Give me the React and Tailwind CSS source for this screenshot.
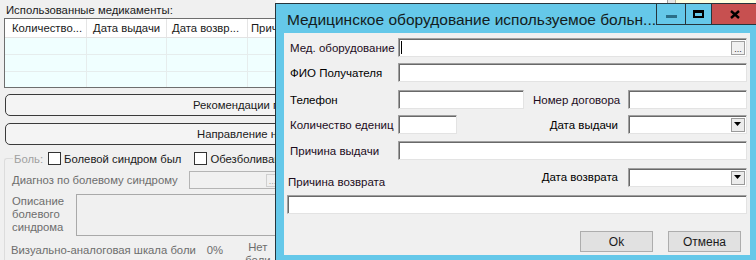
import React from "react";

const sunken =
  "bg-white border border-t-[#a0a0a0] border-l-[#a0a0a0] border-b-[#e3e3e3] border-r-[#e3e3e3] shadow-[inset_1px_1px_0_#696969]";

function Field({ className = "", children }) {
  return (
    <div className={`h-[19px] flex items-center shrink-0 ${sunken} ${className}`}>
      {children}
    </div>
  );
}

function DotsButton() {
  return (
    <div className="ml-auto mr-[1px] w-[14px] h-[14px] border border-[#a0a0a0] bg-[#f0f0f0] flex items-end justify-center text-[9px] leading-[9px] text-[#303030]">
      ...
    </div>
  );
}

function DropButton() {
  return (
    <div className="ml-auto mr-[1px] w-[14px] h-[14px] border border-[#9a9a9a] bg-[#ececec] flex items-center justify-center">
      <svg width="8" height="5" viewBox="0 0 8 5">
        <path d="M0 0h7L3.5 4z" fill="#000" />
      </svg>
    </div>
  );
}

function Label({ className = "", children }) {
  return (
    <div className={`text-[11.5px] leading-[14px] whitespace-nowrap shrink-0 text-[#1c0c1c] ${className}`}>
      {children}
    </div>
  );
}

function Checkbox() {
  return <div className="w-[13px] h-[13px] border border-[#333] bg-white shrink-0" />;
}

function BackgroundApp() {
  return (
    <div className="flex w-[756px] h-[260px] text-[11.3px]">
      <div className="w-[276px] shrink-0 overflow-hidden bg-[#f0f0f0] pt-[3px]">
        <div className="pl-[6px] h-[15px] leading-[14px] text-[#1a1a1a] whitespace-nowrap">
          Использованные медикаменты:
        </div>
        <div className="ml-[4px] w-[320px] h-[70px] border border-[#6e6e6e] bg-[#f0ffff] flex flex-col">
          <div className="flex h-[19px] bg-white border-b border-[#e3e3e3] leading-[14px] text-[#1a1a1a] whitespace-nowrap">
            <div className="w-[82px] border-r border-[#e5e5e5] pl-[7px] flex items-center">Количество...</div>
            <div className="w-[80px] border-r border-[#e5e5e5] pl-[6px] flex items-center">Дата выдачи</div>
            <div className="w-[81px] border-r border-[#e5e5e5] pl-[5px] flex items-center">Дата возвр...</div>
            <div className="flex-1 pl-[3px] flex items-center">Причина</div>
          </div>
          {[0, 1, 2].map((i) => (
            <div key={i} className={`flex ${i < 2 ? "h-[17px] border-b border-[#e6eded]" : "flex-1"}`}>
              <div className="w-[82px] border-r border-[#e6eded]" />
              <div className="w-[80px] border-r border-[#e6eded]" />
              <div className="w-[81px] border-r border-[#e6eded]" />
              <div className="flex-1" />
            </div>
          ))}
        </div>
        <div className="mt-[6px] ml-[5px] w-[330px] h-[22px] rounded-[5px] border border-[#3a3a3a] bg-[#f4f4f4] flex items-center pl-[187px] text-[#1a1a1a] whitespace-nowrap">
          Рекомендации по лечению
        </div>
        <div className="mt-[7px] ml-[5px] w-[330px] h-[22px] rounded-[5px] border border-[#3a3a3a] bg-[#f4f4f4] flex items-center pl-[191px] text-[#1a1a1a] whitespace-nowrap">
          Направление на
        </div>
        <fieldset className="mt-[6px] ml-[4px] w-[330px] h-[120px] border-l border-t border-[#dcdcdc] rounded-tl-[3px]">
          <legend className="ml-[8px] h-[15px] flex items-center leading-[14px] whitespace-nowrap">
            <span className="text-[#a0a0a0] pl-[1px]">Боль:</span>
            <span className="ml-[5px]"><Checkbox /></span>
            <span className="ml-[3px] text-[#1a1a1a]">Болевой синдром был</span>
            <span className="ml-[13px]"><Checkbox /></span>
            <span className="ml-[3px] text-[#1a1a1a]">Обезболивание</span>
          </legend>
          <div className="flex mt-[5px] pl-[7px] h-[18px] items-center">
            <div className="w-[177px] leading-[14px] text-[#6d6d6d] whitespace-nowrap">
              Диагноз по болевому синдрому
            </div>
            <div className="w-[120px] h-[18px] border border-[#b4b4b4] bg-[#f0f0f0] flex items-center">
              <div className="ml-[76px] w-[13px] h-[13px] border border-[#cfcfcf] flex items-end justify-center text-[9px] leading-[9px] text-[#a0a0a0]">
                ...
              </div>
            </div>
          </div>
          <div className="flex mt-[5px] pl-[7px]">
            <div className="w-[64px] pt-[1px] leading-[13px] text-[#6d6d6d]">
              Описание
              <br />
              болевого
              <br />
              синдрома
            </div>
            <div className="w-[220px] h-[42px] border border-[#a9a9a9] bg-[#f0f0f0]" />
          </div>
          <div className="flex mt-[5px] pl-[6px] leading-[13px] text-[#6d6d6d] whitespace-nowrap">
            <div className="pt-[3px]">Визуально-аналоговая шкала боли</div>
            <div className="pt-[3px] ml-[11px]">0%</div>
            <div className="ml-[22px] text-center">
              Нет
              <br />
              боли
            </div>
          </div>
        </fieldset>
      </div>
      <div className="flex-1 bg-white" />
      <div className="w-[8px] bg-[#e6e6e6] border-l border-[#a0a0a0]" />
      <div className="w-[81px] bg-[#ffffe1] border-l border-[#b8b89a]" />
    </div>
  );
}

function Dialog() {
  return (
    <div className="absolute left-[275px] top-[3px] w-[481px] h-[257px] bg-[#65c8e9] border-l border-t border-[#26353c] flex flex-col">
      <div className="h-[29px] flex items-start shrink-0">
        <div className="ml-[11px] mt-[7px] text-[15.5px] leading-[18px] text-[#141c20] whitespace-nowrap">
          Медицинское оборудование используемое больн...
        </div>
        <div className="ml-auto mr-[1px] -mt-px flex h-[22px]">
          <div className="w-[30px] border border-[#26353c] flex items-center justify-center">
            <div className="w-[11px] h-[3px] bg-[#2a6e88] mt-[5px]" />
          </div>
          <div className="w-[26px] border-y border-r border-[#26353c] flex items-center justify-center">
            <div className="w-[11px] h-[8px] border-2 border-t-[3px] border-black" />
          </div>
          <div className="w-[47px] border-y border-r border-[#26353c] bg-[#c75050] flex items-center justify-center">
            <svg width="10" height="9" viewBox="0 0 10 9">
              <path d="M1 1l8 7M9 1l-8 7" stroke="#000" strokeWidth="2.4" />
            </svg>
          </div>
        </div>
      </div>
      <div className="ml-[8px] w-[466px] h-[222px] bg-[#f0f0f0] flex flex-col pt-[5px]">
        <div className="flex items-center">
          <Label className="w-[114px] pl-[6px]">Мед. оборудование</Label>
          <Field className="w-[349px]">
            <div className="ml-[2px] w-px h-[13px] bg-black" />
            <DotsButton />
          </Field>
        </div>
        <div className="flex items-center mt-[6px]">
          <Label className="w-[114px] pl-[6px] text-black">ФИО Получателя</Label>
          <Field className="w-[349px]" />
        </div>
        <div className="flex items-center mt-[8px]">
          <Label className="w-[114px] pl-[6px] text-black">Телефон</Label>
          <Field className="w-[126px]" />
          <Label className="w-[104px] pl-[9px]">Номер договора</Label>
          <Field className="w-[119px]" />
        </div>
        <div className="flex items-center mt-[6px]">
          <Label className="w-[114px] pl-[6px]">Количество едениц</Label>
          <Field className="w-[59px]" />
          <Label className="w-[171px] pr-[10px] text-right text-black">Дата выдачи</Label>
          <Field className="w-[119px]">
            <DropButton />
          </Field>
        </div>
        <div className="flex items-center mt-[7px]">
          <Label className="w-[114px] pl-[6px]">Причина выдачи</Label>
          <Field className="w-[349px]" />
        </div>
        <div className="flex items-start mt-[8px]">
          <Label className="w-[257px] pl-[4px] mt-[7px]">Причина возврата</Label>
          <Label className="w-[87px] pr-[10px] mt-[2px] text-right text-black">Дата возврата</Label>
          <Field className="w-[119px]">
            <DropButton />
          </Field>
        </div>
        <div className="mt-[6px] ml-[3px]">
          <Field className="w-[460px]" />
        </div>
        <div className="flex mt-[17px] justify-end pr-[9px] gap-[15px] text-[12px]">
          <div className="w-[73px] h-[21px] bg-[#e1e1e1] border border-[#adadad] flex items-center justify-center text-[#1a1a1a]">
            Ok
          </div>
          <div className="w-[73px] h-[21px] bg-[#e1e1e1] border border-[#adadad] flex items-center justify-center text-[#1a1a1a]">
            Отмена
          </div>
        </div>
      </div>
    </div>
  );
}

export default function App() {
  return (
    <div className="relative w-[756px] h-[260px] overflow-hidden bg-[#f0f0f0] font-['Liberation_Sans',Arial,sans-serif]">
      <BackgroundApp />
      <Dialog />
    </div>
  );
}
